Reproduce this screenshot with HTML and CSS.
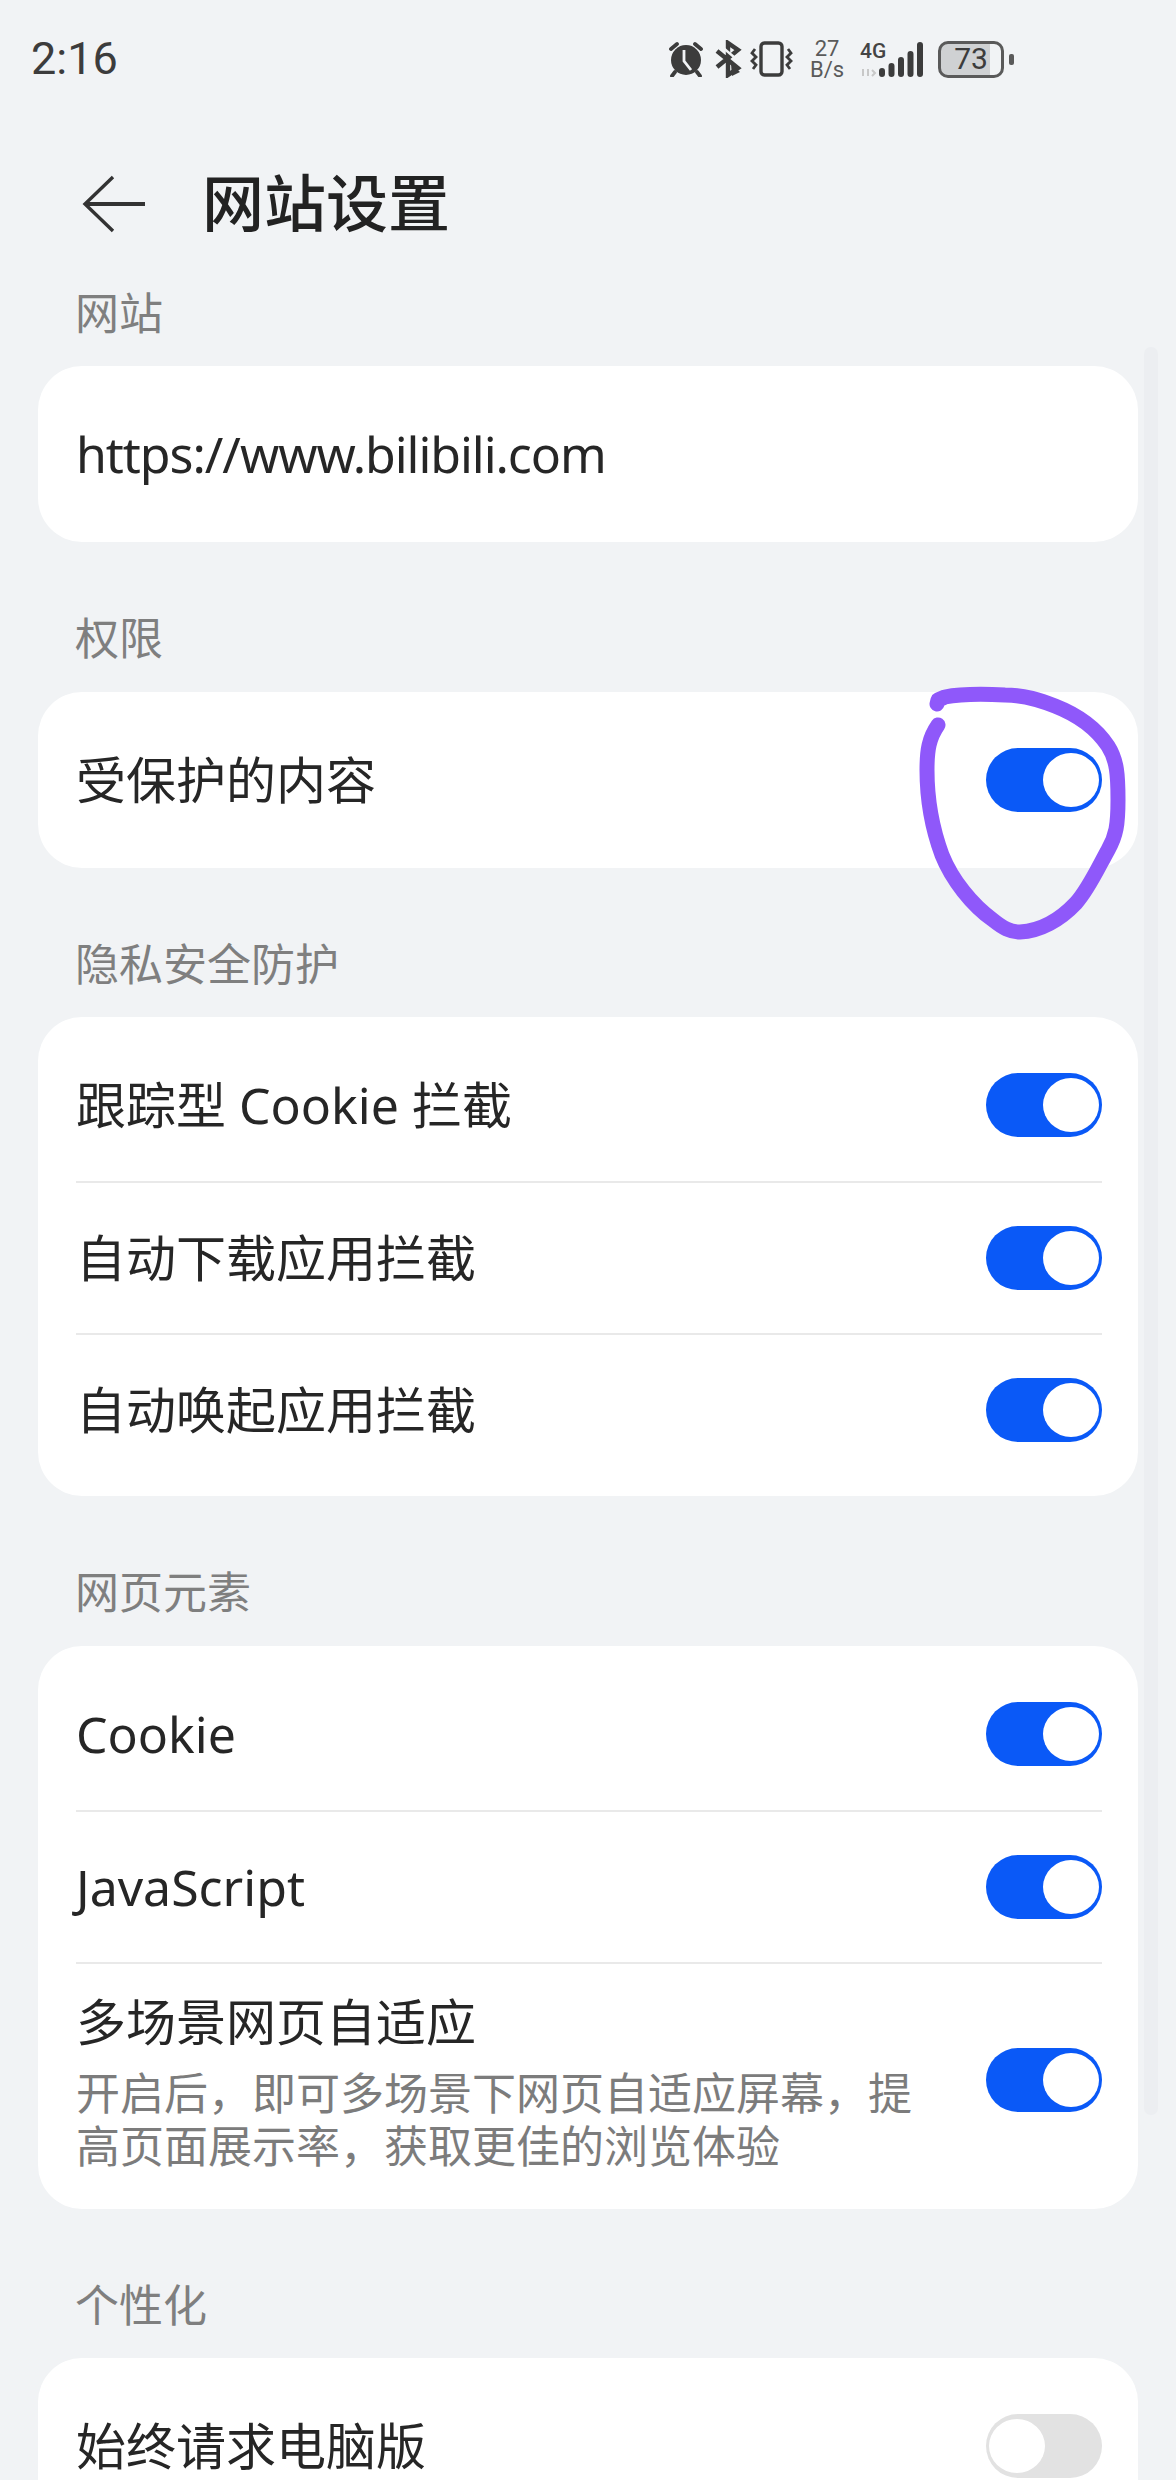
FILE: index.html
```html
<!DOCTYPE html>
<html lang="zh-CN">
<head>
    <meta charset="UTF-8">
    <title>网站设置</title>
    <link rel="stylesheet" href="styles.css">
</head>
<body>

    <!-- 状态栏 -->
    <div class="statusbar">
        <span class="time">2:16</span>
        <div class="status-icons">
            <svg class="ico-alarm" width="40" height="36" viewBox="0 0 40 36">
                <circle cx="20" cy="19" r="15" fill="#3c3c3c"/>
                <path d="M5 8 L11 3 M35 8 L29 3 M9 31 L6 35 M31 31 L34 35" stroke="#3c3c3c" stroke-width="3.8" stroke-linecap="round"/>
                <path d="M18 9 V20 L25 29" stroke="#f1f3f5" stroke-width="2.8" fill="none"/>
            </svg>
            <svg class="ico-bt" width="28" height="38" viewBox="0 0 28 38">
                <path d="M3 11 L24 28 L14 35 V3 L24 10 L3 27" stroke="#3c3c3c" stroke-width="4.4" fill="none"/>
                <path d="M17 24 L26 32 L18 36 Z" fill="#3c3c3c"/>
                <path d="M7 6 L27 23" stroke="#f1f3f5" stroke-width="2.4"/>
            </svg>
            <svg class="ico-vib" width="44" height="36" viewBox="0 0 44 36">
                <rect x="11" y="2" width="21" height="32" rx="3.5" fill="none" stroke="#3c3c3c" stroke-width="3.4"/>
                <path d="M5 8 L2 12 L6 16 L2 20 L6 24 L3 28 M38 8 L41 12 L37 16 L41 20 L37 24 L40 28" fill="none" stroke="#3c3c3c" stroke-width="2.8"/>
            </svg>
            <div class="speed"><span>27</span><span>B/s</span></div>
            <div class="net">
                <span class="net-type">4G</span>
                <svg width="64" height="36" viewBox="0 0 64 36">
                    <path d="M3 28 V35 M8 35 V28 M12 29 L15 32 L12 35" stroke="#c8c8c8" stroke-width="2" fill="none"/>
                    <path d="M22 30 V33 M31.5 25 V33 M41 19 V33 M50.5 13 V33 M60 4 V33" stroke="#3c3c3c" stroke-width="6" stroke-linecap="round"/>
                </svg>
            </div>
            <div class="battery">
                <div class="battery-body"><span>73</span></div>
                <i class="battery-nub"></i>
            </div>
        </div>
    </div>

    <!-- 标题栏 -->
    <header class="titlebar">
        <svg class="back" width="64" height="58" viewBox="0 0 64 58">
            <path d="M31 2 L3 29 L31 56" fill="none" stroke="#333" stroke-width="3.4"/>
            <path d="M3 29 H63" fill="none" stroke="#333" stroke-width="4"/>
        </svg>
        <h1>网站设置</h1>
    </header>

    <main class="content">
        <h2 class="section first">网站</h2>
        <div class="card">
            <div class="row"><span class="row-title url">https://www.bilibili.com</span></div>
        </div>

        <h2 class="section">权限</h2>
        <div class="card">
            <div class="row"><span class="row-title">受保护的内容</span><i class="toggle on"></i></div>
        </div>

        <h2 class="section">隐私安全防护</h2>
        <div class="card short-end">
            <div class="row"><span class="row-title">跟踪型 Cookie 拦截</span><i class="toggle on"></i></div>
            <div class="row"><span class="row-title">自动下载应用拦截</span><i class="toggle on"></i></div>
            <div class="row"><span class="row-title">自动唤起应用拦截</span><i class="toggle on"></i></div>
        </div>

        <h2 class="section">网页元素</h2>
        <div class="card">
            <div class="row"><span class="row-title">Cookie</span><i class="toggle on"></i></div>
            <div class="row"><span class="row-title">JavaScript</span><i class="toggle on"></i></div>
            <div class="row tall">
                <div class="row-text">
                    <span class="row-title">多场景网页自适应</span>
                    <p class="row-desc">开启后，即可多场景下网页自适应屏幕，提高页面展示率，获取更佳的浏览体验</p>
                </div>
                <i class="toggle on"></i>
            </div>
        </div>

        <h2 class="section">个性化</h2>
        <div class="card">
            <div class="row"><span class="row-title">始终请求电脑版</span><i class="toggle"></i></div>
        </div>
    </main>

    <!-- 滚动条 -->
    <div class="scroll-track"></div>

    <!-- 手写圈注 -->
    <svg class="scribble" width="1176" height="2480" viewBox="0 0 1176 2480">
        <path d="M938 725 C929 738 927 750 927 770 C927 800 932 828 942 855 C952 880 972 905 993 920 C1003 928 1010 932 1020 932 C1040 931 1060 920 1076 903 C1088 890 1098 868 1108 850 C1116 836 1118 825 1118 800 C1118 775 1117 760 1108 746 C1096 728 1078 715 1055 706 C1040 700 1025 695 1005 695 C985 694 960 694 945 697 L938 700 L937 704" fill="none" stroke="#8f58fa" stroke-width="15" stroke-linecap="round" stroke-linejoin="round"/>
    </svg>

</body>
</html>
```

FILE: styles.css
```css
/* Estilos generales */
* {
    box-sizing: border-box;
}

html, body {
    height: 2480px;
}

body {
    margin: 0;
    padding: 0;
    overflow: hidden;
    position: relative;
    background: #f1f3f5;
    font-family: 'Noto Sans', 'Noto Sans CJK SC', sans-serif;
    color: #262626;
}

/* Status bar */
.statusbar {
    height: 118px;
    padding: 40px 0 0 31px;
    display: flex;
    align-items: flex-start;
    justify-content: space-between;
    color: #3c3c3c;
}

.time {
    font-family: 'Roboto', sans-serif;
    font-size: 45px;
    line-height: 38px;
}

.status-icons {
    width: 510px;
    display: flex;
    align-items: center;
    height: 38px;
}

.ico-alarm { margin-right: 8px; }
.ico-bt { margin-right: 8px; }
.ico-vib { margin-right: 14px; }

.speed {
    width: 38px;
    margin-right: 14px;
    display: flex;
    flex-direction: column;
    align-items: center;
    font-family: 'Roboto', sans-serif;
    font-size: 22px;
    line-height: 21px;
    color: #5a5a5a;
}

.net {
    width: 64px;
    height: 36px;
    position: relative;
    margin-right: 14px;
}

.net-type {
    position: absolute;
    left: 0;
    top: -1px;
    font-family: 'Roboto', sans-serif;
    font-size: 21px;
    line-height: 22px;
    font-weight: 500;
    color: #444;
}

.battery {
    display: flex;
    align-items: center;
}

.battery-body {
    width: 66px;
    height: 37px;
    border: 3px solid #5a5a5a;
    border-radius: 10px;
    background: linear-gradient(to right, #cfd1d3 0 82%, transparent 82%);
    display: flex;
    align-items: center;
    justify-content: center;
    font-family: 'Roboto', sans-serif;
    font-size: 30px;
    line-height: 30px;
    color: #3c3c3c;
}

.battery-nub {
    width: 5px;
    height: 11px;
    margin-left: 5px;
    border-radius: 2px;
    background: #5a5a5a;
}

/* Title */
.titlebar {
    height: 172px;
    padding-left: 82px;
    display: flex;
    align-items: flex-start;
}

.back {
    margin-top: 57px;
}

.titlebar h1 {
    margin: 40px 0 0 56px;
    font-size: 62px;
    line-height: 90px;
    font-weight: 500;
    color: #222;
}

/* Sections */
.content {
    padding: 0 38px;
}

.section {
    margin: 0;
    height: 149.5px;
    padding: 68px 0 0 37px;
    font-size: 44px;
    line-height: 56px;
    font-weight: 400;
    color: #7f7f7f;
}

.section.first {
    height: 79px;
    padding-top: 0;
    margin-top: -5px;
    margin-bottom: 2px;
}

.card {
    background: #fff;
    border-radius: 44px;
    padding: 12px 36px 12px 38px;
}

.card.short-end {
    padding-bottom: 11px;
}

.row {
    height: 152px;
    display: flex;
    align-items: center;
    justify-content: space-between;
    border-top: 2px solid #e9e9e9;
}

.row:first-child {
    border-top: none;
}

.row.tall {
    height: 235px;
}

.row-title {
    font-size: 50px;
    line-height: 64px;
}

.url {
    letter-spacing: -1.05px;
}

.row-text {
    width: 850px;
    padding-top: 5px;
}

.row-text .row-title {
    display: block;
    margin-top: -3px;
}

.row-desc {
    margin: 13px 0 0;
    font-size: 44px;
    line-height: 53px;
    color: #7c7c7c;
}

/* Toggle */
.toggle {
    width: 116px;
    height: 64px;
    flex: none;
    display: flex;
    align-items: center;
    justify-content: flex-start;
    padding: 0 3px;
    border-radius: 32px;
    background: #e2e2e2;
}

.toggle::after {
    content: '';
    width: 56px;
    height: 54px;
    border-radius: 50%;
    background: #fff;
}

.toggle.on {
    justify-content: flex-end;
    background: #0a59f7;
}

/* Scroll track */
.scroll-track {
    position: absolute;
    left: 1144px;
    top: 347px;
    width: 14px;
    height: 1768px;
    border-radius: 7px;
    background: #eceef1;
}

/* Annotation */
.scribble {
    position: absolute;
    left: 0;
    top: 0;
    pointer-events: none;
}
```
